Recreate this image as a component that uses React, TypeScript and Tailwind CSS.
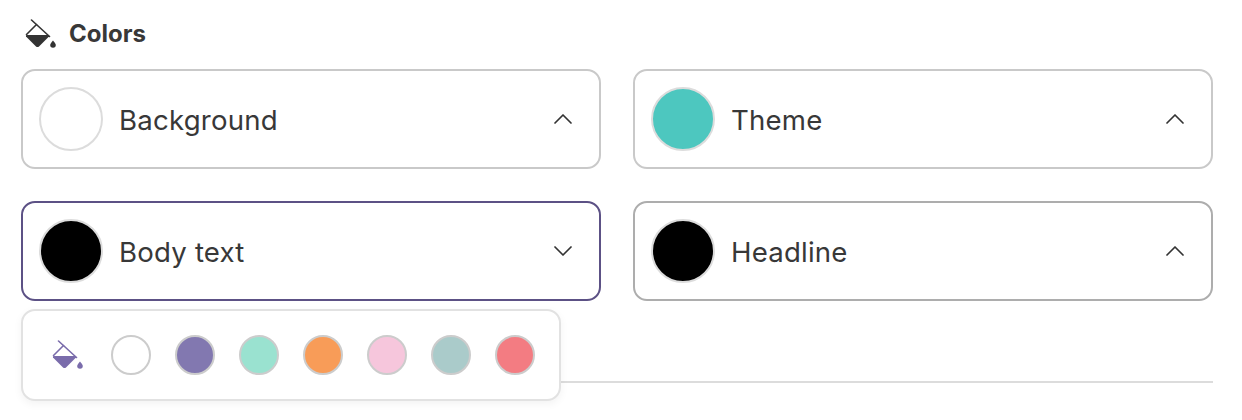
import { ChevronUp, ChevronDown } from "lucide-react";

function BucketIcon({ className }: { className?: string }) {
  return (
    <svg viewBox="0 0 32 30" className={className} fill="none">
      <path d="M6.5 1 L24.5 17.5" stroke="currentColor" strokeWidth="1.6" strokeLinecap="round" />
      <path d="M11.5 5.5 L1.5 15.5" stroke="currentColor" strokeWidth="1.6" strokeLinecap="round" />
      <path d="M1.5 16 H23.5 Q24.5 16.5 24 17.5 L14 27.5 Q12.5 28.6 11 27.5 L1 17.5 Q0.5 16.5 1.5 16 Z" fill="currentColor" />
      <path d="M28 21.5 Q30.8 24.8 30.8 26 A2.8 2.8 0 0 1 25.2 26 Q25.2 24.8 28 21.5 Z" fill="currentColor" />
    </svg>
  );
}

interface SelectProps {
  label: string;
  color: string;
  open?: boolean;
  borderClass?: string;
}

function ColorSelect({ label, color, open, borderClass }: SelectProps) {
  const Chevron = open ? ChevronDown : ChevronUp;
  return (
    <div className={`flex items-center justify-between h-[100px] rounded-[14px] border-2 pl-[16px] pr-[20px] bg-white ${borderClass ?? "border-[#c9c9c9]"}`}>
      <div className="flex items-center gap-[16px]">
        <span className="w-[64px] h-[64px] rounded-full border-2 border-[#dcdcdc]" style={{ backgroundColor: color }} />
        <span className="text-[27.6px] leading-none pt-[3px] text-[#383838] tracking-[0.2px]">{label}</span>
      </div>
      <Chevron className="w-8 h-8 text-[#333]" strokeWidth={1.3} />
    </div>
  );
}

const swatches = ["#ffffff", "#8278b0", "#9ae2d0", "#f89c58", "#f6c6dc", "#aacbca", "#f37c82"];

export default function App() {
  return (
    <div className="relative w-[1242px] h-[420px] bg-white overflow-hidden font-['Inter',sans-serif] px-[21px] pt-[15px]">
      <div className="flex items-center gap-[12px] h-[38px] pl-[4px] text-[#333]">
        <BucketIcon className="w-[32px] h-[30px]" />
        <span className="text-[24px] font-bold text-[#383838]">Colors</span>
      </div>
      <div className="grid grid-cols-2 gap-x-[32px] gap-y-[32px] w-[1192px] mt-[16px]">
        <ColorSelect label="Background" color="#ffffff" />
        <ColorSelect label="Theme" color="#4dc7bf" />
        <ColorSelect label="Body text" color="#000000" open borderClass="border-[#5c5185]" />
        <ColorSelect label="Headline" color="#000000" borderClass="border-[#adadad]" />
      </div>
      <div className="h-[2px] bg-[#dcdcdc] w-[1192px] mt-[80px]" />
      <div className="absolute left-[21px] top-[309px] w-[540px] h-[92px] rounded-[14px] border-2 border-[#e2e2e2] bg-white shadow-[0_3px_8px_rgba(0,0,0,0.05)] flex items-center pl-[29px]">
        <BucketIcon className="w-[32px] h-[30px] text-[#7a6cab] mr-[27px]" />
        <div className="flex items-center gap-6">
          {swatches.map((c) => (
            <span key={c} className="w-10 h-10 rounded-full border-2 border-[#cccccc]" style={{ backgroundColor: c }} />
          ))}
        </div>
      </div>
    </div>
  );
}
